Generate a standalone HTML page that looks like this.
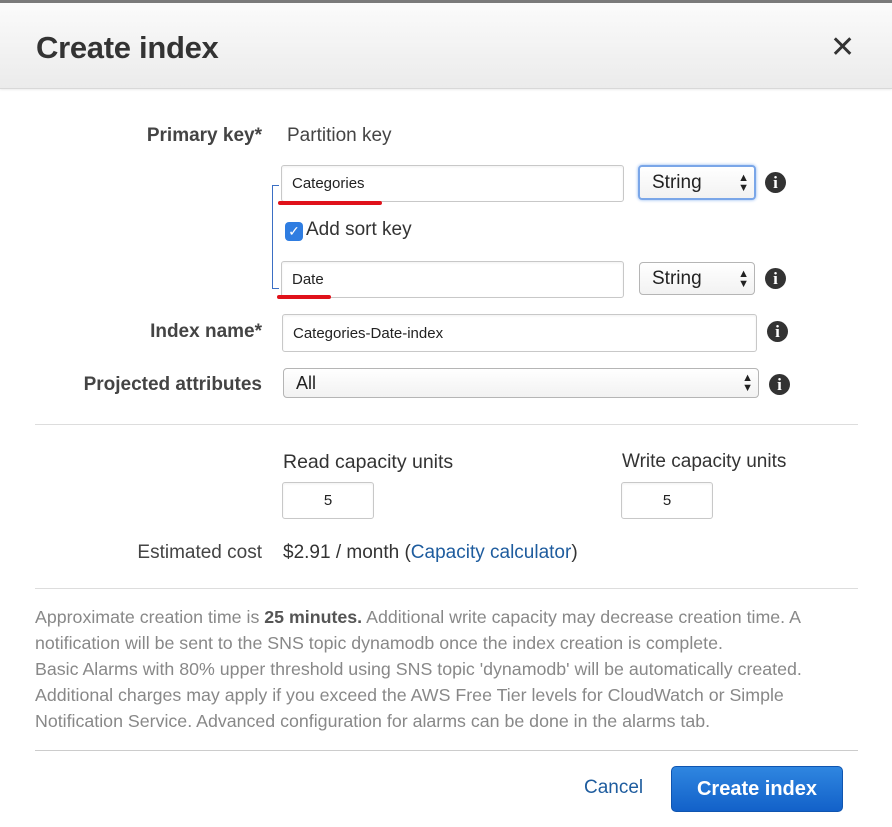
<!DOCTYPE html>
<html><head><style>
*{margin:0;padding:0;box-sizing:border-box}
body{width:892px;height:827px;background:#fff;font-family:"Liberation Sans",Arial,sans-serif;position:relative;overflow:hidden;color:#333}
.a{position:absolute}
.hdr{left:0;top:0;width:892px;height:89px;background:linear-gradient(#fbfbfb,#ebebeb);border-top:3px solid #7a7a7a;border-bottom:1px solid #d8d8d8;box-shadow:0 1px 2px rgba(0,0,0,.08)}
.lbl{font-weight:bold;font-size:19px;color:#444;text-align:right;width:262px;left:0}
.inp{border:1px solid #c8c8c8;border-radius:3px;background:#fff;font-size:15px;color:#222;padding-left:10px;display:flex;align-items:center;box-shadow:inset 0 1px 2px rgba(0,0,0,.06)}
.sel{border:1px solid #b5b5b5;border-radius:4px;background:linear-gradient(#fff,#f2f2f2);font-size:19px;color:#222;padding-left:12px;display:flex;align-items:center}
.arr{position:absolute;right:5px;top:50%;transform:translateY(-50%);font-size:11px;line-height:10px;text-align:center;color:#222}
.info{width:21px;height:21px;border-radius:50%;background:#333;color:#fff;font-weight:bold;font-family:"Liberation Serif",serif;font-size:17px;text-align:center;line-height:21px}
.red{background:#e0111a;height:4px;border-radius:2px}
.hr{height:1px;background:#ddd;left:35px;width:823px}
.txt{font-size:17.8px;color:#888;line-height:26px;white-space:nowrap}
</style></head><body>
<div class="a hdr"></div>
<div class="a" style="left:36px;top:30px;font-size:31px;font-weight:bold;color:#333;letter-spacing:-0.3px">Create index</div>
<div class="a" style="left:830px;top:30px;font-size:30px;color:#333">✕</div>

<div class="a lbl" style="top:125px">Primary key*</div>
<div class="a" style="left:287px;top:125px;font-size:19px;color:#444">Partition key</div>

<div class="a" style="left:272px;top:185px;width:7px;height:104px;border:1px solid #3b6fc4;border-right:none"></div>
<div class="a inp" style="left:281px;top:165px;width:343px;height:37px">Categories</div>
<div class="a red" style="left:278px;top:201px;width:104px"></div>
<div class="a sel" style="left:638px;top:165px;width:118px;height:35px;border:2px solid #7aa6e8;box-shadow:0 0 3px #8ab4f0">String<div class="arr">▲<br>▼</div></div>
<div class="a info" style="left:765px;top:172px">i</div>

<div class="a" style="left:285px;top:222px;width:18px;height:19px;border-radius:4px;background:#2f7de1;color:#fff;font-size:14px;text-align:center;line-height:19px">✓</div>
<div class="a" style="left:306px;top:219px;font-size:19px;color:#333">Add sort key</div>

<div class="a inp" style="left:281px;top:261px;width:343px;height:37px">Date</div>
<div class="a red" style="left:277px;top:295px;width:54px"></div>
<div class="a sel" style="left:639px;top:262px;width:116px;height:33px">String<div class="arr">▲<br>▼</div></div>
<div class="a info" style="left:765px;top:268px">i</div>

<div class="a lbl" style="top:321px">Index name*</div>
<div class="a inp" style="left:282px;top:314px;width:475px;height:38px">Categories-Date-index</div>
<div class="a info" style="left:767px;top:321px">i</div>

<div class="a lbl" style="top:374px">Projected attributes</div>
<div class="a sel" style="left:283px;top:368px;width:476px;height:30px;font-size:18px;padding-left:12px">All<div class="arr">▲<br>▼</div></div>
<div class="a info" style="left:769px;top:374px">i</div>

<div class="a hr" style="top:424px"></div>

<div class="a" style="left:283px;top:451px;font-size:19.5px;color:#333">Read capacity units</div>
<div class="a" style="left:622px;top:451px;font-size:19px;color:#333">Write capacity units</div>
<div class="a inp" style="left:282px;top:482px;width:92px;height:37px;justify-content:center;padding:0">5</div>
<div class="a inp" style="left:621px;top:482px;width:92px;height:37px;justify-content:center;padding:0">5</div>

<div class="a" style="left:0;width:262px;text-align:right;top:542px;font-size:19px;color:#444">Estimated cost</div>
<div class="a" style="left:283px;top:542px;font-size:19px;color:#333">$2.91 / month (<span style="color:#1e5c9e">Capacity calculator</span>)</div>

<div class="a hr" style="top:588px"></div>

<div class="a txt" style="left:35px;top:604px">Approximate creation time is <b style="color:#555">25 minutes.</b> Additional write capacity may decrease creation time. A<br>notification will be sent to the SNS topic dynamodb once the index creation is complete.<br>Basic Alarms with 80% upper threshold using SNS topic 'dynamodb' will be automatically created.<br>Additional charges may apply if you exceed the AWS Free Tier levels for CloudWatch or Simple<br>Notification Service. Advanced configuration for alarms can be done in the alarms tab.</div>

<div class="a hr" style="top:750px;background:#ccc"></div>

<div class="a" style="left:584px;top:777px;font-size:19px;color:#1e5c9e">Cancel</div>
<div class="a" style="left:671px;top:766px;width:172px;height:46px;border-radius:5px;background:linear-gradient(#2f86e0,#1261c9);border:1px solid #0f55b0;color:#fff;font-weight:bold;font-size:20px;text-align:center;line-height:44px">Create index</div>
</body></html>
